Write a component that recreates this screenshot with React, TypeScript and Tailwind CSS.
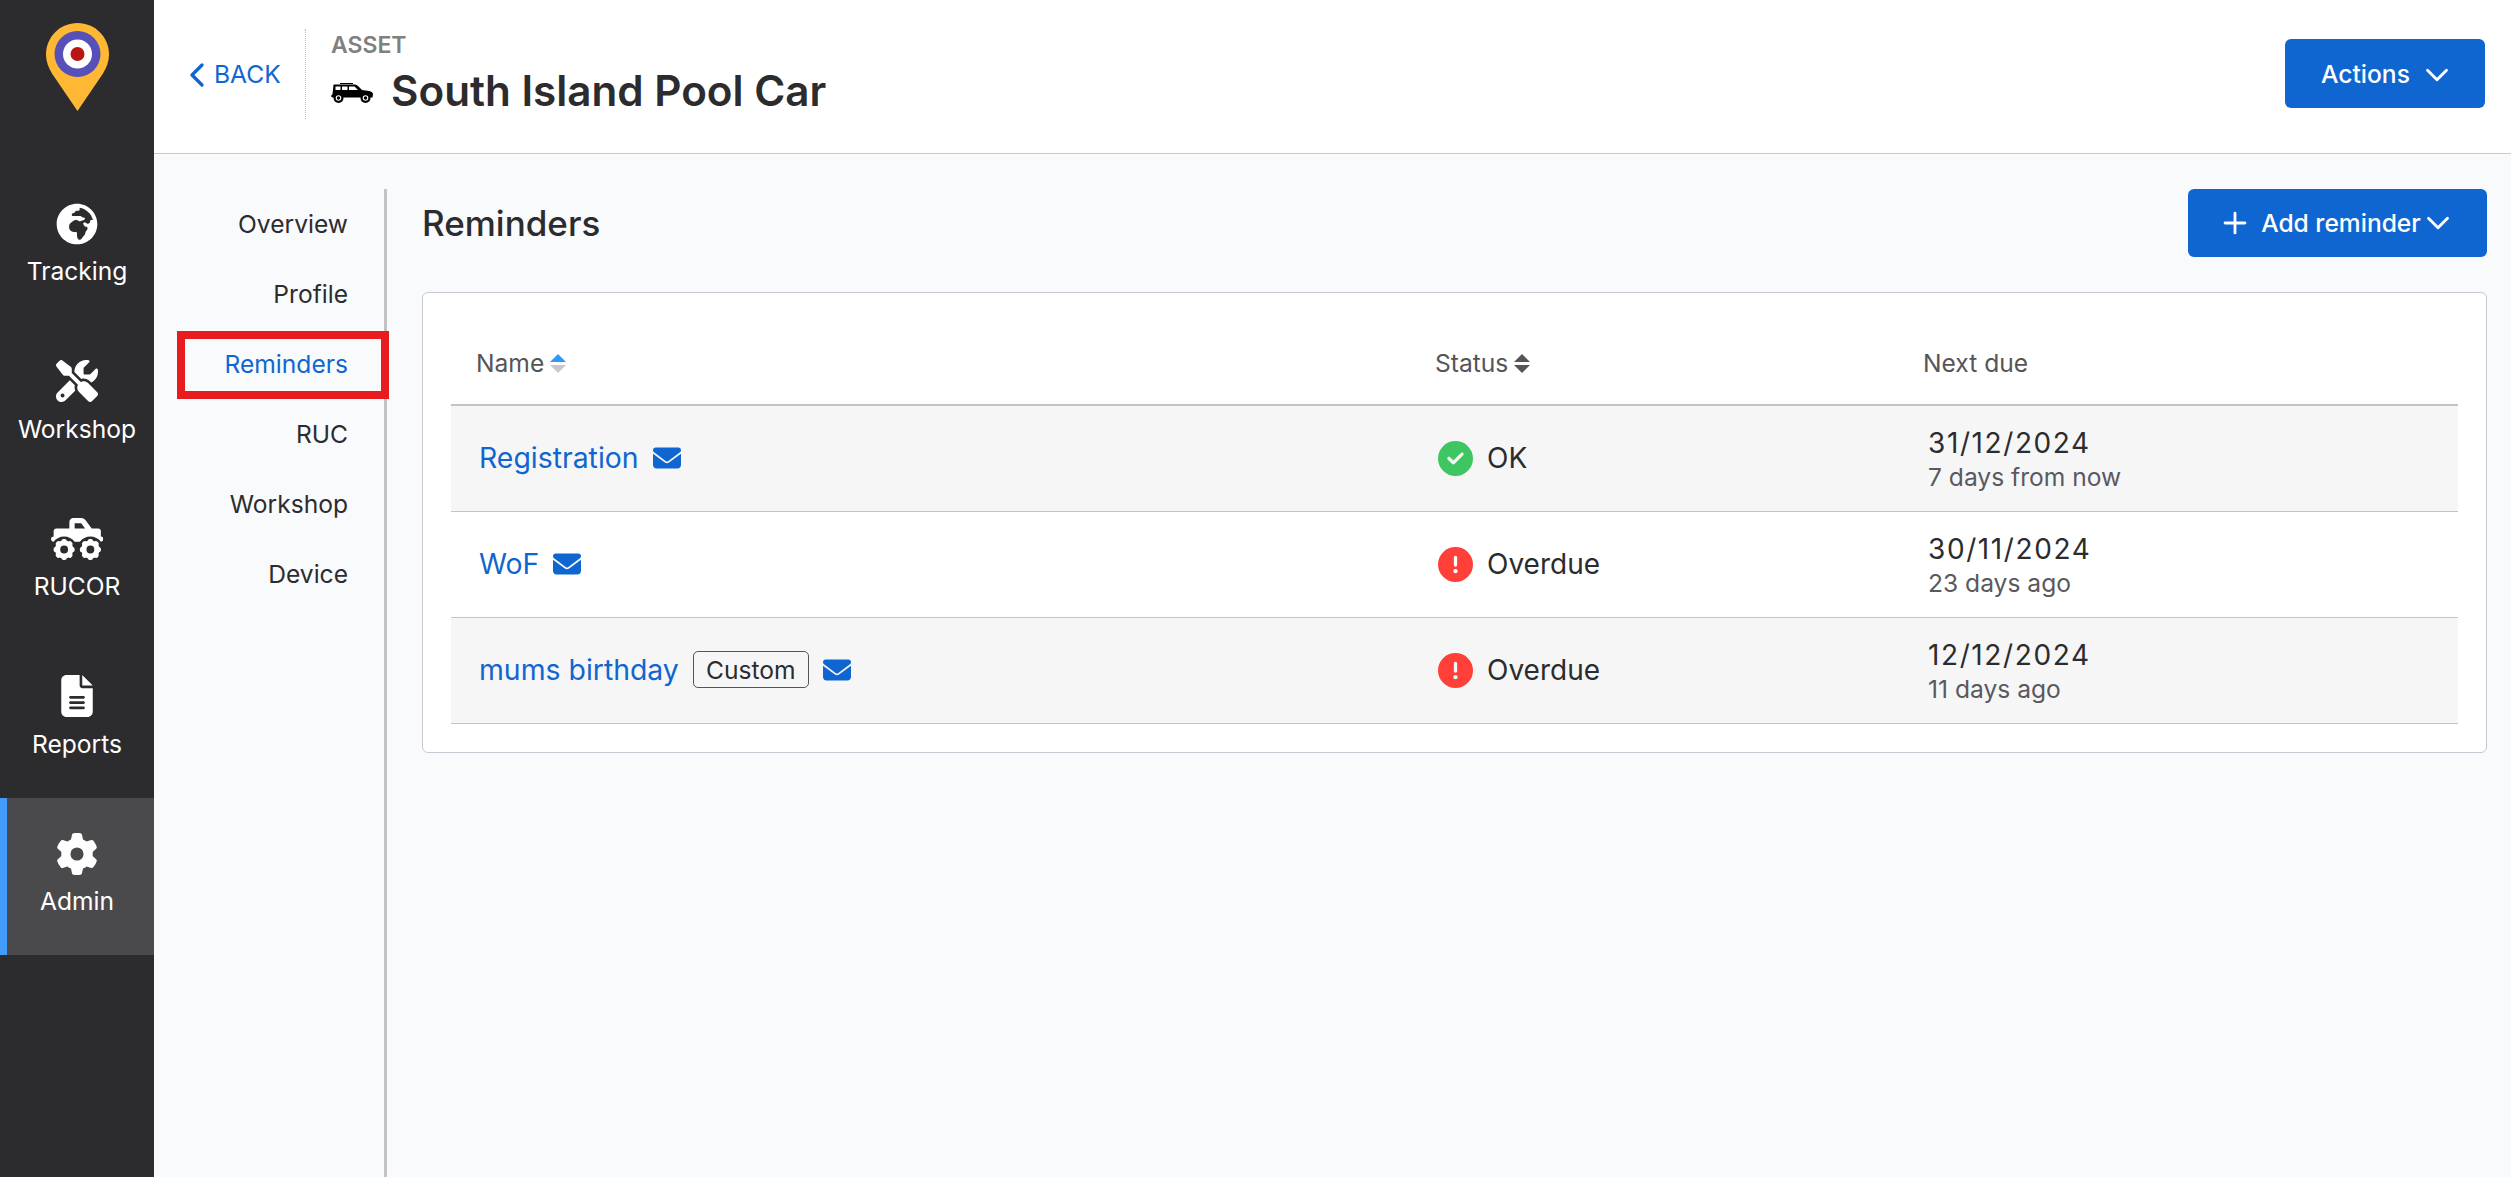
import { ChevronDown, ChevronLeft, Plus } from "lucide-react";
import { FaGlobeAfrica } from "react-icons/fa";
import {
  FaCircleCheck,
  FaCircleExclamation,
  FaEnvelope,
  FaFileLines,
  FaGear,
  FaScrewdriverWrench,
  FaTruckMonster,
} from "react-icons/fa6";

const sideItems = [
  { label: "Tracking", icon: FaGlobeAfrica, iconClass: "w-[42px] h-[42px]" },
  { label: "Workshop", icon: FaScrewdriverWrench, iconClass: "w-[42px] h-[42px]" },
  { label: "RUCOR", icon: FaTruckMonster, iconClass: "w-[52.5px] h-[42px]" },
  { label: "Reports", icon: FaFileLines, iconClass: "w-[32px] h-[42px]" },
  { label: "Admin", icon: FaGear, iconClass: "w-[42px] h-[42px]", active: true },
];

const navItems = ["Overview", "Profile", "Reminders", "RUC", "Workshop", "Device"];

const rows = [
  { name: "Registration", ok: true, status: "OK", date: "31/12/2024", rel: "7 days from now" },
  { name: "WoF", status: "Overdue", date: "30/11/2024", rel: "23 days ago" },
  { name: "mums birthday", custom: true, status: "Overdue", date: "12/12/2024", rel: "11 days ago" },
];

function Logo() {
  return (
    <svg width="63" height="88" viewBox="0 0 63 88">
      <path d="M31.5 0C14 0 0 14 0 31.5c0 7 2.5 13 6 19L31.5 88 57 50.5c3.500-6 6-12 6-19C63 14 49 0 31.500 0z" fill="#ffb833" />
      <circle cx="31.500" cy="31" r="23" fill="#5750b8" />
      <circle cx="31.500" cy="31" r="14.500" fill="#ffffff" />
      <circle cx="31.500" cy="31" r="7" fill="#b91613" />
    </svg>
  );
}

function Jeep() {
  return (
    <svg width="42" height="20" viewBox="0 0 42 20" className="mt-[4px]">
      <path d="M9 0h13v1H9z" fill="#000" />
      <path d="M3 1.500h21c1 0 2 .5 3 1.500l4 4 7 1c2.500.5 4 1.500 4 3l-.5 3.500H1L0 13l1.500-2 1-9z" fill="#000" />
      <rect x="4.500" y="3.500" width="5" height="3.500" fill="#fff" />
      <rect x="11" y="3.500" width="5.500" height="3.500" fill="#fff" />
      <path d="M18 3.500h5.500L27 7h-9z" fill="#fff" />
      <circle cx="7.500" cy="15" r="5" fill="#000" />
      <circle cx="7.500" cy="15" r="2.800" fill="#fff" />
      <circle cx="7.500" cy="15" r="1.700" fill="#000" />
      <circle cx="34.500" cy="15" r="5" fill="#000" />
      <circle cx="34.500" cy="15" r="2.800" fill="#fff" />
      <circle cx="34.500" cy="15" r="1.700" fill="#000" />
    </svg>
  );
}

function SortIcon({ up, down }: { up: string; down: string }) {
  return (
    <svg width="16" height="19" viewBox="0 0 16 19" className="ml-[6px]">
      <path d="M8 0l8 8H0z" fill={up} />
      <path d="M8 19l8-8H0z" fill={down} />
    </svg>
  );
}

export default function App() {
  return (
    <div className="flex h-screen bg-[#f9fafc] font-['Inter',sans-serif] text-[#2c2c2e] overflow-hidden">
      <aside className="w-[154px] shrink-0 bg-[#2c2c2e] text-white">
        <div className="h-[167.5px] pt-[23px] flex justify-center">
          <Logo />
        </div>
        {sideItems.map((item) => (
          <div
            key={item.label}
            className={
              "h-[157.5px] pt-[35px] flex flex-col items-center " +
              (item.active ? "bg-[#4a4a4c] border-l-[7px] border-[#439cfb] pr-[7px]" : "")
            }
          >
            <item.icon className={item.iconClass} />
            <span className="mt-[11.5px] text-[24.6px] leading-[30px]">{item.label}</span>
          </div>
        ))}
      </aside>

      <div className="flex-1 flex flex-col min-w-0">
        <header className="h-[154px] shrink-0 bg-white border-b border-[#c8c8d2] flex items-center pl-[36px] pr-[26px] pb-[6px]">
          <a className="flex items-center text-[#1066d1] text-[24.6px] w-[115px] pt-[2px]">
            <ChevronLeft size={40} strokeWidth={2} className="-ml-[13px] -mr-[3px]" />
            BACK
          </a>
          <div className="h-[90px] border-l border-dotted border-[#bbbbc0] mr-[25px]" />
          <div className="flex-1 pt-[1px]">
            <div className="text-[23px] leading-[26px] font-semibold text-[#808080]">ASSET</div>
            <div className="flex items-center mt-[8px]">
              <Jeep />
              <h1 className="ml-[18px] text-[42.2px] leading-[50px] font-semibold">South Island Pool Car</h1>
            </div>
          </div>
          <button className="w-[200px] h-[69px] rounded-[6px] bg-[#1066d1] text-white text-[24.6px] font-medium flex items-center pl-[36px] pt-[2px]">
            Actions
            <ChevronDown size={38} strokeWidth={1.8} className="ml-[8px]" />
          </button>
        </header>

        <div className="flex-1 flex min-h-0">
          <nav className="w-[233px] shrink-0 mt-[35px] border-r-[3px] border-[#c4c4c6] pr-[36px] text-[24.6px]">
            {navItems.map((item) => (
              <div
                key={item}
                className={
                  "relative h-[70px] flex items-center justify-end pt-[1px] " +
                  (item === "Reminders" ? "text-[#1066d1]" : "")
                }
              >
                {item}
                {item === "Reminders" && (
                  <span className="absolute left-[23px] -right-[41px] top-[2px] h-[68px] border-[8px] border-[#e81c1f]" />
                )}
              </div>
            ))}
          </nav>

          <main className="flex-1 pl-[35px] pr-[24px] pt-[35px] min-w-0">
            <div className="flex items-center justify-between h-[68px]">
              <h2 className="text-[35px] font-medium">Reminders</h2>
              <button className="w-[299px] h-[68px] rounded-[6px] bg-[#1066d1] text-white text-[24.6px] font-medium flex items-center justify-center">
                <Plus size={34} strokeWidth={2} className="mr-[9px]" />
                Add reminder
                <ChevronDown size={38} strokeWidth={1.8} className="-ml-[2px]" />
              </button>
            </div>

            <div className="mt-[35px] bg-white border border-[#c8c8d2] rounded-[6px] px-[28px] pt-[27px] pb-[28px]">
              <table className="w-full table-fixed border-collapse">
                <colgroup>
                  <col className="w-[961px]" />
                  <col className="w-[488px]" />
                  <col />
                </colgroup>
                <thead>
                  <tr className="h-[85px] border-b-[2px] border-[#c4c4c6] text-[#555558] text-[24.6px] text-left">
                    <th className="font-normal pl-[25px] pt-[3px]">
                      <span className="flex items-center">
                        Name
                        <SortIcon up="#2e9bfb" down="#c8c8cc" />
                      </span>
                    </th>
                    <th className="font-normal pl-[23px] pt-[3px]">
                      <span className="flex items-center">
                        Status
                        <SortIcon up="#555558" down="#555558" />
                      </span>
                    </th>
                    <th className="font-normal pl-[23px] pt-[3px]">Next due</th>
                  </tr>
                </thead>
                <tbody>
                  {rows.map((row, i) => (
                    <tr key={row.name} className={"h-[106px] border-b border-[#c4c4c8] " + (i % 2 === 0 ? "bg-[#f6f6f6]" : "")}>
                      <td className="pl-[28px]">
                        <div className="flex items-center">
                          <a className="text-[#1066d1] text-[28.4px]">{row.name}</a>
                          {row.custom && (
                            <span className="ml-[14px] h-[37px] w-[116px] flex items-center justify-center rounded-[5px] border border-[#555558] text-[24.6px]">
                              Custom
                            </span>
                          )}
                          <FaEnvelope size={28} className="ml-[14px] text-[#1066d1]" />
                        </div>
                      </td>
                      <td className="pl-[26px]">
                        <div className="flex items-center text-[28px]">
                          {row.ok ? (
                            <FaCircleCheck size={35} className="text-[#3ec662]" />
                          ) : (
                            <FaCircleExclamation size={35} className="text-[#ff3f38]" />
                          )}
                          <span className="ml-[14px]">{row.status}</span>
                        </div>
                      </td>
                      <td className="pl-[28px] pt-[3px]">
                        <div className="text-[28px] leading-[35px] tracking-[1.6px]">{row.date}</div>
                        <div className="text-[24.6px] leading-[32px] text-[#59595e]">{row.rel}</div>
                      </td>
                    </tr>
                  ))}
                </tbody>
              </table>
            </div>
          </main>
        </div>
      </div>
    </div>
  );
}
